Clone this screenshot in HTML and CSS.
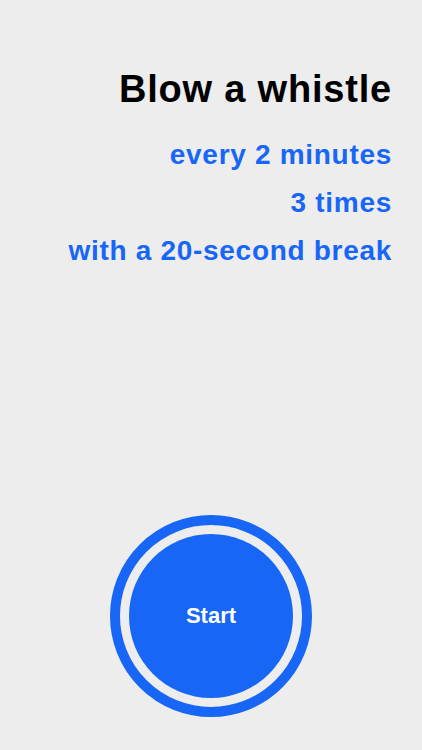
FILE: index.html
```html
<!DOCTYPE html>
<html lang="en">
  <head>
    <meta charset="UTF-8" />
    <meta name="viewport" content="width=device-width, initial-scale=1.0" />
    <title>Whistle Timer</title>
    <link rel="stylesheet" href="styles.css">
  </head>

  <body>
    <div class="screen">
      <div class="summary">
        <h1>Blow a whistle</h1>
        <p class="option">every 2 minutes</p>
        <p class="option">3 times</p>
        <p class="option">with a 20-second break</p>
      </div>

      <div class="start-wrap">
        <button type="button" class="start-ring">
          <span class="start-btn">Start</span>
        </button>
      </div>
    </div>
  </body>
</html>
```

FILE: styles.css
```css
body {
  margin: 0;
  background-color: #ededed;
  font-family: "Liberation Sans", Arial, sans-serif;
}

.screen {
  display: flex;
  flex-direction: column;
  height: 100vh;
}

.summary {
  padding: 66px 30px 0 0;
  text-align: right;
}

.summary h1 {
  margin: 0 0 19px;
  font-size: 38px;
  line-height: 46px;
  letter-spacing: 0.8px;
  font-weight: bold;
  color: #000;
}

.option {
  margin: 0;
  font-size: 28px;
  line-height: 48px;
  letter-spacing: 0.7px;
  font-weight: bold;
  color: #1766f6;
}

.start-wrap {
  margin-top: auto;
  padding-bottom: 33px;
  display: flex;
  justify-content: center;
}

.start-ring {
  width: 202px;
  height: 202px;
  padding: 9px;
  border: 10px solid #1766f6;
  border-radius: 50%;
  background: transparent;
  cursor: pointer;
  box-sizing: border-box;
}

.start-btn {
  display: flex;
  align-items: center;
  justify-content: center;
  width: 100%;
  height: 100%;
  border-radius: 50%;
  background-color: #1766f6;
  color: #fff;
  font-family: "Liberation Sans", Arial, sans-serif;
  font-size: 22px;
  font-weight: bold;
}
```
